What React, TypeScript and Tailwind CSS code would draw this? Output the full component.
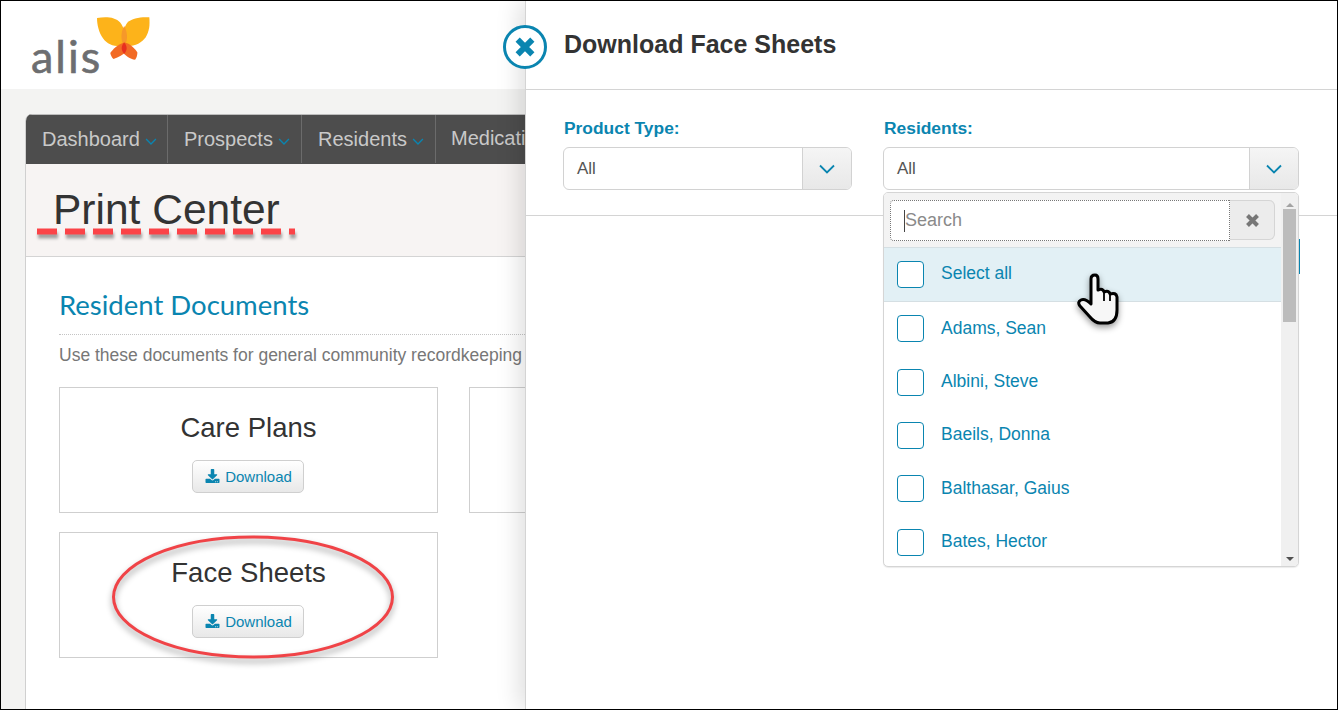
import { FaDownload } from "react-icons/fa";

const residents = ["Adams, Sean", "Albini, Steve", "Baeils, Donna", "Balthasar, Gaius", "Bates, Hector"];
const navItems = ["Dashboard", "Prospects", "Residents"];

function Chevron({ className, weight = 1.8 }: { className: string; weight?: number }) {
  return (
    <svg viewBox="0 0 16 10" className={className} fill="none" stroke="currentColor" strokeWidth={weight}>
      <path d="M1 1.5 8 8.5 15 1.5" />
    </svg>
  );
}

function Cross({ className }: { className: string }) {
  return (
    <svg viewBox="0 0 24 24" className={className} fill="none" stroke="currentColor" strokeWidth="6.5">
      <path d="M4 4 20 20M20 4 4 20" />
    </svg>
  );
}

function Logo() {
  return (
    <div className="flex items-start">
      <span className="mt-[28px] ml-[30px] font-['Lato',sans-serif] text-[45px] leading-[54px] tracking-[2px] text-[#6d6e70] [-webkit-text-stroke:0.6px_#6d6e70]">
        alis
      </span>
      <svg viewBox="225 15 170 145" className="mt-[14px] ml-[-7px] h-[48px] w-[57px] shrink-0">
        <path d="M230 24C255 20 285 20 300 38 312 52 318 80 315 108 285 112 262 105 248 85 236 68 230 45 230 24Z" fill="#fdb31a" />
        <path d="M388 22C365 20 335 24 322 38 310 52 306 80 310 108 340 112 365 100 377 82 388 65 390 45 388 22Z" fill="#fdb31a" />
        <path d="M312 48C322 65 325 90 312 110 300 90 302 65 312 48Z" fill="#f6982a" />
        <path d="M312 98C295 102 278 118 270 130 272 138 275 145 280 148 295 142 310 135 318 125Z" fill="#f26a25" />
        <path d="M312 98C330 100 345 118 352 128 352 138 348 146 345 150 330 148 315 138 306 125Z" fill="#f26a25" />
        <path d="M312 98C322 108 322 122 312 132 302 122 302 108 312 98Z" fill="#e8301f" />
      </svg>
    </div>
  );
}

function DocCard({ title }: { title?: string }) {
  return (
    <div className="flex h-[126px] flex-col items-center border border-[#cfcfcf] pt-[22px]">
      {title && (
        <>
          <h3 className="text-[27.5px] leading-[36px] text-[#333]">{title}</h3>
          <button className="mt-[14px] ml-[-2px] flex h-[33px] w-[112px] items-center justify-center gap-[5px] rounded-[5px] border border-[#cfcfcf] bg-gradient-to-b from-white to-[#e8e8e8] pl-[2px] pt-[1px] text-[15px] text-[#0a85b0]">
            <FaDownload className="h-[14px] w-[15px] -translate-y-[1px]" />
            Download
          </button>
        </>
      )}
    </div>
  );
}

function SelectBox({ width }: { width: string }) {
  return (
    <div className={`flex h-[43px] ${width} overflow-hidden rounded-[6px] border border-[#d2d2d2]`}>
      <div className="flex-1 pl-[13px] text-[17px] leading-[41px] text-[#555]">All</div>
      <div className="flex w-[49px] items-center justify-center border-l border-[#d2d2d2] bg-gradient-to-b from-[#f5f5f5] to-[#e8e8e8] text-[#0a85b0]">
        <Chevron className="h-[10px] w-[16px]" />
      </div>
    </div>
  );
}

function Option({ label, active }: { label: string; active?: boolean }) {
  return (
    <div className={`flex items-center gap-[17px] pl-[13px] ${active ? "h-[55px] border-y border-[#d5dfe3] bg-[#e2f0f5] pb-[1px]" : "h-[53.4px]"}`}>
      <span className="h-[27px] w-[27px] rounded-[4px] border border-[#0a85b0] bg-white" />
      <span className="-translate-y-[1px] text-[17.5px] text-[#0a85b0]">{label}</span>
    </div>
  );
}

function Dropdown() {
  return (
    <div className="absolute left-[357px] top-[191px] flex h-[375px] w-[416px] overflow-hidden rounded-[5px] border border-[#d5d5d5] bg-white shadow-[0_1px_1px_rgba(0,0,0,0.08)]">
      <div className="min-w-0 flex-1">
        <div className="flex h-[54px] bg-[#f3f3f3] pl-[6px] pr-[6px] pt-[7px]">
          <div className="flex h-[41px] flex-1 items-center rounded-l-[4px] border border-dotted border-[#777] bg-white pl-[13px] text-[18px] text-[#8a8a8a]">
            <span className="h-[22px] w-px bg-[#444]" />
            Search
          </div>
          <div className="flex h-[40px] w-[45px] items-center justify-center rounded-r-[6px] border border-l-0 border-[#d5d5d5] bg-[#ececec] text-[#777]">
            <Cross className="h-[15px] w-[15px]" />
          </div>
        </div>
        <Option label="Select all" active />
        {residents.map((r) => (
          <Option key={r} label={r} />
        ))}
      </div>
      <div className="flex w-[17px] flex-col items-center bg-[#f0f0f0]">
        <span className="mt-[10px] h-0 w-0 border-x-[4px] border-b-[4px] border-x-transparent border-b-[#a3a3a3]" />
        <span className="mt-[2px] h-[113px] w-[13px] bg-[#bcbcbc]" />
        <span className="mt-auto mb-[5px] h-0 w-0 border-x-[4px] border-t-[4px] border-x-transparent border-t-[#505050]" />
      </div>
    </div>
  );
}

export default function App() {
  return (
    <div className="relative flex h-[710px] w-[1338px] overflow-hidden border border-black bg-white font-['Liberation_Sans',sans-serif]">
      <div className="flex w-[524px] shrink-0 flex-col overflow-hidden bg-[#f3f3f2]">
        <header className="h-[88px] shrink-0 bg-white">
          <Logo />
        </header>
        <div className="ml-[24px] mt-[25px] flex w-[600px] flex-1 flex-col overflow-hidden rounded-t-[7px] border-l border-[#d0d0d0] bg-white">
          <nav className="flex h-[50px] shrink-0 border-t border-[#bdbdbd] bg-[#4d4d4d] pb-[1px] text-[20px] text-[#c9c9c9]">
            {navItems.map((item, i) => (
              <div
                key={item}
                className={`flex items-center gap-[5px] border-r border-[#6b6b6b] pl-[16px] ${i === 0 ? "w-[142px]" : "w-[134px]"}`}
              >
                {item}
                <Chevron className="h-[7px] w-[12px] translate-y-[2px] text-[#0a85b0]" weight={2} />
              </div>
            ))}
            <div className="pl-[15px] leading-[47px]">Medications</div>
          </nav>
          <div className="h-[93px] shrink-0 border-b border-[#d4d4d4] bg-[#f7f4f3] pl-[27px] pt-[19px] text-[42.5px] leading-[54px] text-[#333]">
            Print Center
          </div>
          <div className="pl-[33px] pt-[30px]">
            <h2 className="font-['Lato',sans-serif] text-[27.5px] leading-[36px] text-[#0a85b0]">Resident Documents</h2>
            <div className="mt-[11px] w-[500px] border-t border-dotted border-[#c4c4c4]" />
            <p className="mt-[8px] whitespace-nowrap text-[17.5px] leading-[24px] text-[#777]">
              Use these documents for general community recordkeeping
            </p>
            <div className="mt-[20px] grid grid-cols-[379px_379px] gap-x-[31px] gap-y-[19px]">
              <DocCard title="Care Plans" />
              <DocCard />
              <DocCard title="Face Sheets" />
            </div>
          </div>
        </div>
      </div>

      <div className="relative z-10 flex-1 border-l border-[#d4d4d4] bg-white shadow-[-6px_0_22px_rgba(0,0,0,0.13)]">
        <div className="absolute -left-[23px] top-[24px] flex h-[44px] w-[44px] items-center justify-center rounded-full border-[3px] border-[#0a85b0] bg-white text-[#0a85b0]">
          <Cross className="h-[22px] w-[22px]" />
        </div>
        <div className="h-[89px] border-b border-[#d4d4d4] pl-[38px] pt-[28px] text-[25px] font-bold leading-[30px] text-[#333]">
          Download Face Sheets
        </div>
        <div className="flex h-[126px] gap-[31px] border-b border-[#d4d4d4] pl-[37px] pt-[27px]">
          <div>
            <label className="block pl-px text-[17.4px] font-bold leading-[23px] text-[#0a85b0]">Product Type:</label>
            <div className="mt-[7px]">
              <SelectBox width="w-[289px]" />
            </div>
          </div>
          <div>
            <label className="block pl-px text-[17.4px] font-bold leading-[23px] text-[#0a85b0]">Residents:</label>
            <div className="mt-[7px]">
              <SelectBox width="w-[416px]" />
            </div>
          </div>
        </div>
        <span className="absolute left-[773px] top-[238px] h-[35px] w-px bg-[#0a85b0]" />
        <Dropdown />
      </div>

      {/* annotations drawn over the screenshot */}
      <svg className="pointer-events-none absolute left-[30px] top-[222px] z-20 h-[20px] w-[270px] overflow-visible" viewBox="0 0 270 20">
        <path d="M6 9.5H264" stroke="#000" strokeOpacity="0.35" strokeWidth="6" strokeDasharray="20 8" transform="translate(1 3)" style={{ filter: "blur(1.5px)" }} />
        <path d="M6 8.5H264" stroke="#fb4347" strokeWidth="6" strokeDasharray="20 8" fill="none" />
      </svg>
      <svg className="pointer-events-none absolute left-[105px] top-[530px] z-20 h-[140px] w-[300px] overflow-visible" viewBox="0 0 300 140">
        <ellipse cx="147" cy="66" rx="139.5" ry="60" fill="none" stroke="#000" strokeOpacity="0.4" strokeWidth="3" transform="translate(0 4)" style={{ filter: "blur(3px)" }} />
        <ellipse cx="147" cy="66" rx="139.5" ry="60" fill="none" stroke="#f04347" strokeWidth="3" />
      </svg>
      <svg className="pointer-events-none absolute left-[1069px] top-[269px] z-20 h-[60px] w-[56px]" viewBox="0 0 56 60" style={{ filter: "drop-shadow(0 3px 3px rgba(0,0,0,0.4))" }}>
        <path
          d="M21 28V9Q21 5 25 5 28 5 28 9V20Q33 18 34 22 39 20 40 24 46 22 47 27V40Q47 52 38 53H30Q25 53 20 47L10 36Q7 32 11 30 15 28 21 34Z"
          fill="#f7f7f7"
          stroke="#000"
          strokeWidth="3"
          strokeLinejoin="round"
        />
        <path d="M34 22V31M40 24V31" stroke="#000" strokeWidth="1.8" fill="none" />
      </svg>
    </div>
  );
}
